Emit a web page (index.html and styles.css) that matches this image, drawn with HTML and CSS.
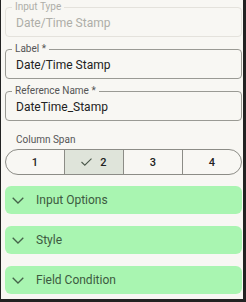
FILE: index.html
```html
<!DOCTYPE html>
<html lang="en">
<head>
  <meta charset="UTF-8">
  <title>Field settings</title>
  <meta name="viewport" content="width=device-width, initial-scale=1.0">
  <link rel="stylesheet" href="styles.css">
</head>
<body>
  <div class="panel">
    <fieldset class="field disabled">
      <legend>Input Type</legend>
      <div class="value">Date/Time Stamp</div>
    </fieldset>

    <fieldset class="field">
      <legend>Label *</legend>
      <div class="value">Date/Time Stamp</div>
    </fieldset>

    <fieldset class="field">
      <legend>Reference Name *</legend>
      <div class="value">DateTime_Stamp</div>
    </fieldset>

    <div class="span-label">Column Span</div>
    <div class="segments">
      <button class="seg">1</button>
      <button class="seg selected">
        <svg width="11" height="8" viewBox="0 0 11 8"><polyline points="0.5,4 3.8,7.2 10.5,0.6" fill="none" stroke="#4d5a4d" stroke-width="1.1"/></svg>
        2
      </button>
      <button class="seg">3</button>
      <button class="seg">4</button>
    </div>

    <!-- sections repliables -->
    <div class="section">
      <svg class="chev" width="12" height="7" viewBox="0 0 12 7"><polyline points="0.7,0.7 6,6 11.3,0.7" fill="none" stroke="#45634a" stroke-width="1.3"/></svg>
      <span>Input Options</span>
    </div>
    <div class="section">
      <svg class="chev" width="12" height="7" viewBox="0 0 12 7"><polyline points="0.7,0.7 6,6 11.3,0.7" fill="none" stroke="#45634a" stroke-width="1.3"/></svg>
      <span>Style</span>
    </div>
    <div class="section">
      <svg class="chev" width="12" height="7" viewBox="0 0 12 7"><polyline points="0.7,0.7 6,6 11.3,0.7" fill="none" stroke="#45634a" stroke-width="1.3"/></svg>
      <span>Field Condition</span>
    </div>
  </div>
</body>
</html>
```

FILE: styles.css
```css
* {
  box-sizing: border-box;
}

body {
  margin: 0;
  font-family: Roboto, 'Liberation Sans', sans-serif;
  background: #f8f7f3;
}

.panel {
  height: 302px;
  background: #f8f7f3;
  border-left: 1px solid #222;
  border-right: 3px solid #222;
  border-bottom: 3px solid #222;
  padding: 1px 0 0 4px;
}

.field {
  margin: 0 1px 6px 0;
  padding: 2px 10px 5px 10px;
  border: 1px solid #9a9a94;
  border-radius: 4px;
}

.field legend {
  font-size: 10px;
  line-height: 12px;
  color: #555;
  padding: 0 3px;
  margin-left: -4px;
}

.field .value {
  font-size: 12px;
  line-height: 16px;
  color: #222;
}

.field.disabled {
  border-color: #e4e2dc;
}

.field.disabled legend,
.field.disabled .value {
  color: #aeaea8;
}

.span-label {
  font-size: 10px;
  color: #555;
  margin: 13px 0 4px 11px;
}

.segments {
  display: flex;
  height: 26px;
  margin-right: 1px;
  border: 1px solid #8c8c86;
  border-radius: 13px;
  overflow: hidden;
  margin-bottom: 11px;
}

.seg {
  flex: 1;
  border: none;
  border-left: 1px solid #8c8c86;
  background: transparent;
  font-family: inherit;
  font-size: 11px;
  font-weight: 500;
  color: #222;
  display: flex;
  align-items: center;
  justify-content: center;
  gap: 8px;
  padding: 0;
}

.seg:first-child {
  border-left: none;
}

.seg.selected {
  background: #dfe4da;
}

.section {
  height: 28px;
  margin-right: 1px;
  background: #a9f5b1;
  border-radius: 6px;
  display: flex;
  align-items: center;
  padding-left: 7px;
  margin-bottom: 12px;
  font-size: 12px;
  color: #3c5a40;
}

.chev {
  margin-right: 12px;
}
```
